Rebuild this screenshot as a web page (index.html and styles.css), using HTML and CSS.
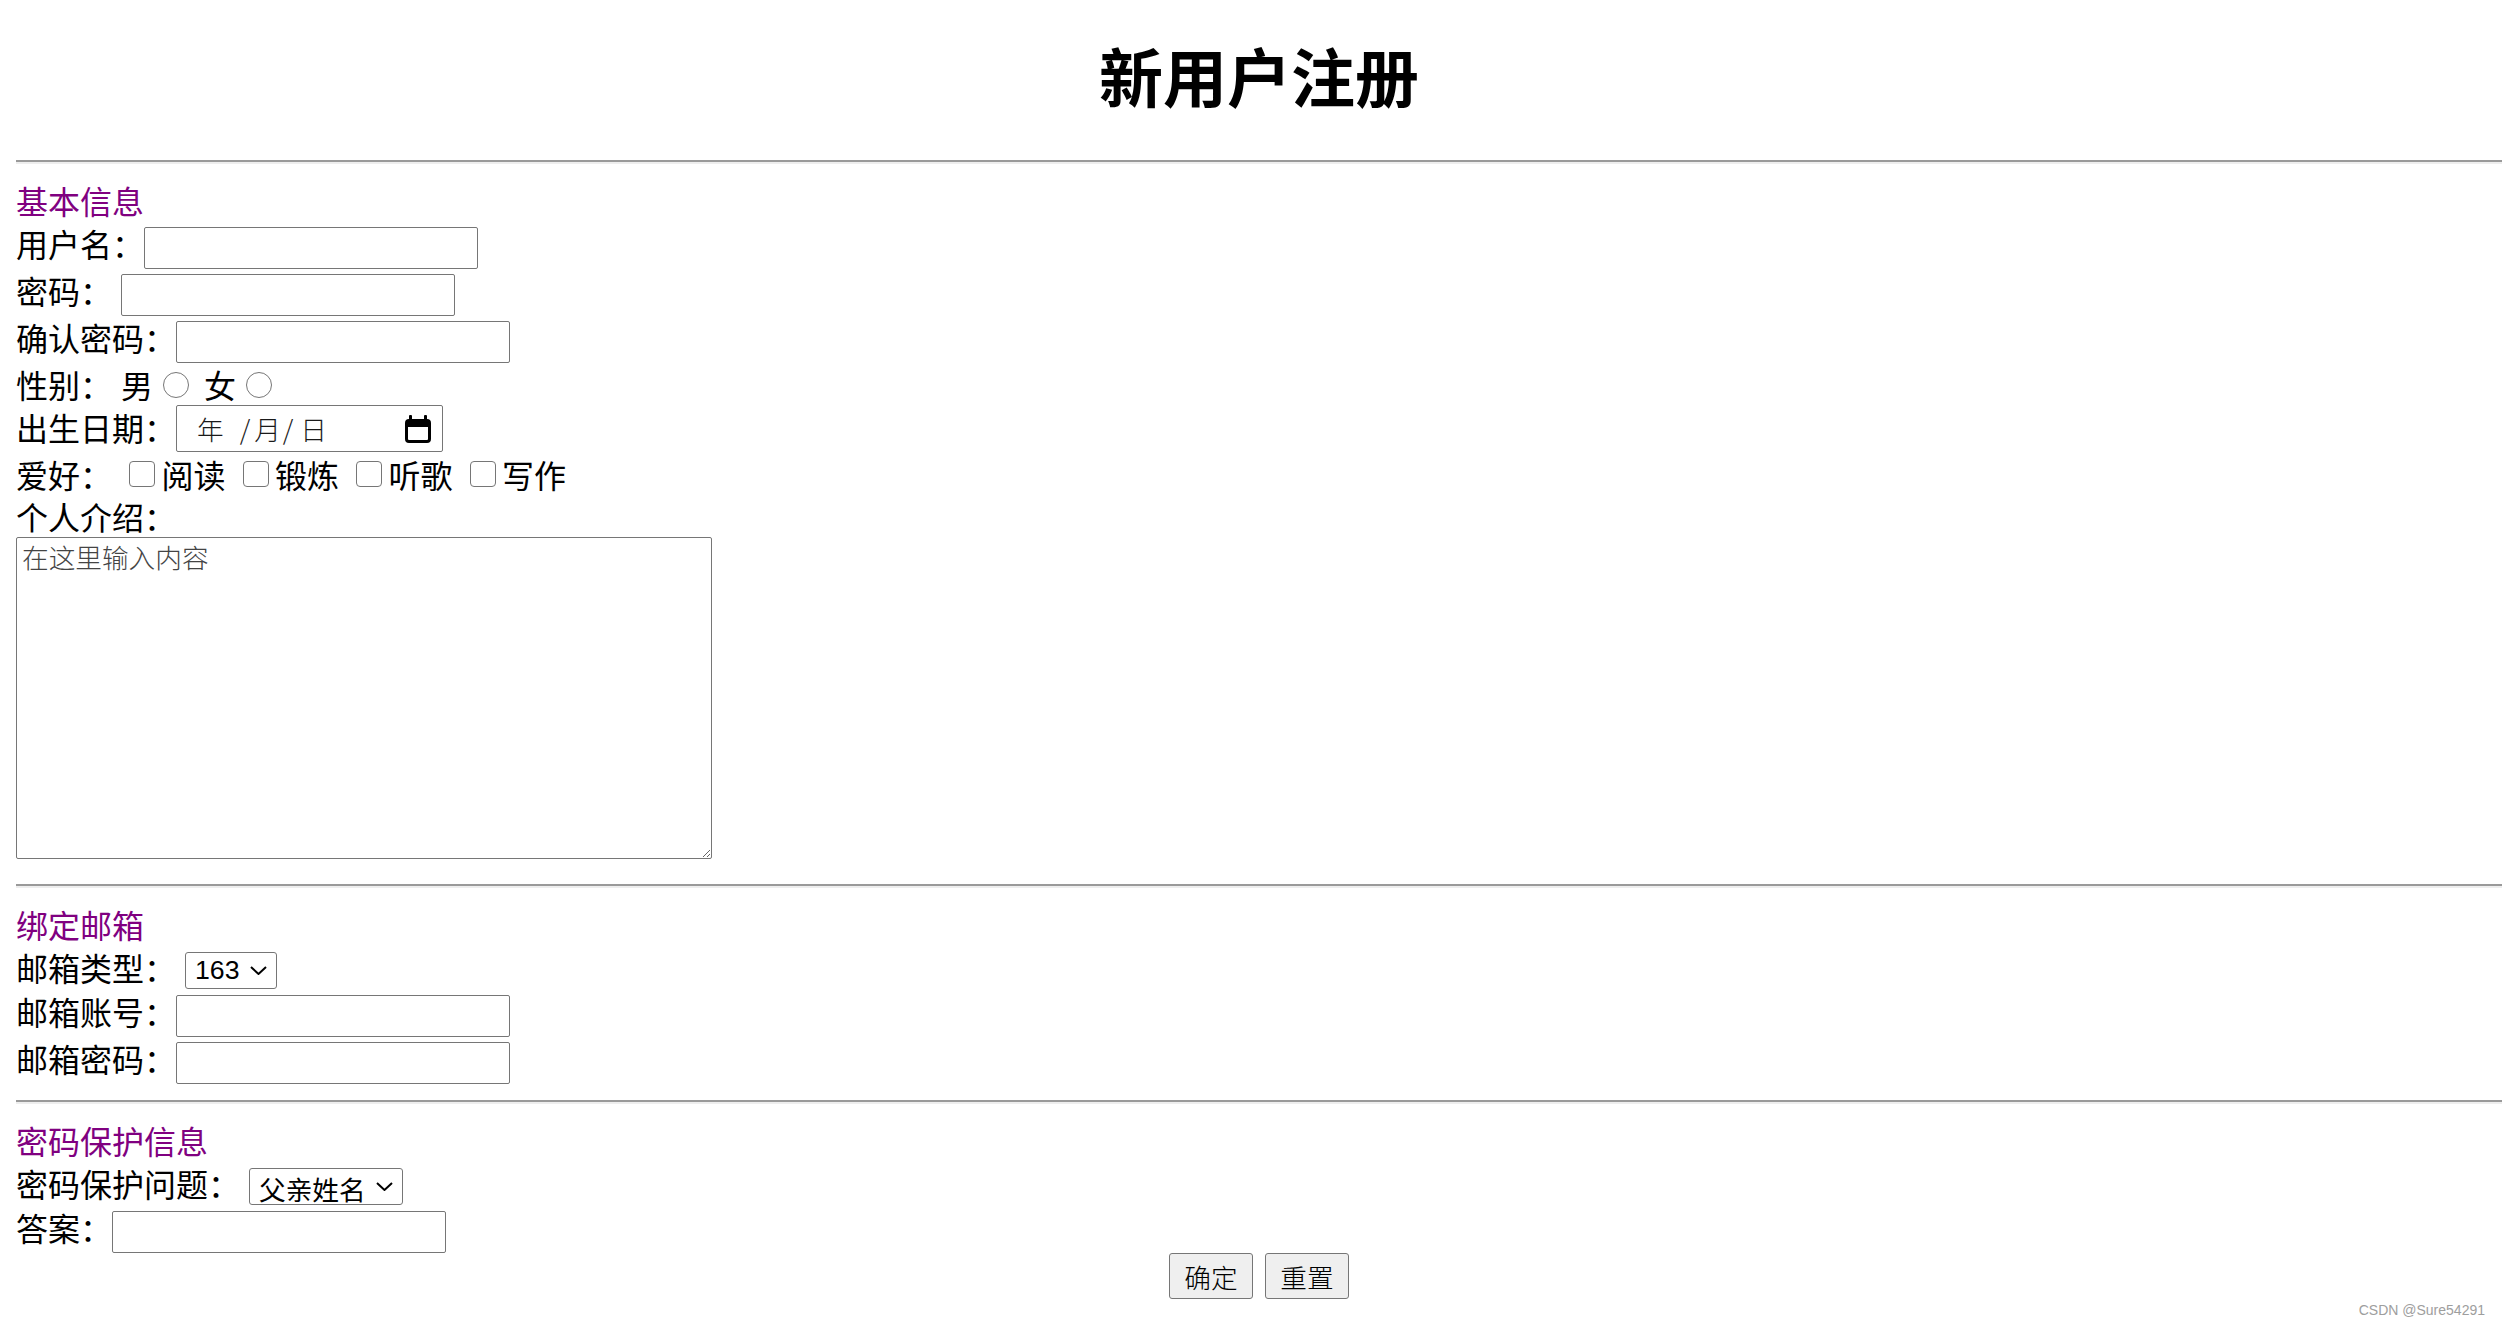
FILE: index.html
```html
<!DOCTYPE html>
<html lang="zh-CN">
<head>
<meta charset="utf-8">
<title>新用户注册</title>
<link rel="stylesheet" href="styles.css">
</head>
<body>
<h1 class="title">新用户注册</h1>
<hr class="rule">
<form class="form">
  <section class="group group-basic">
    <div class="section-title">基本信息</div>
    <div class="row row-field">
      <label class="label">用户名：</label>
      <input class="text-input" type="text">
    </div>
    <div class="row row-field">
      <label class="label">密码：</label>
      <input class="text-input spaced" type="password">
    </div>
    <div class="row row-field">
      <label class="label">确认密码：</label>
      <input class="text-input" type="password">
    </div>
    <div class="row row-choice">
      <span class="label">性别：</span>
      <span class="choice-text spaced">男</span><input class="radio" type="radio" name="sex">
      <span class="choice-text">女</span><input class="radio" type="radio" name="sex">
    </div>
    <div class="row row-date">
      <span class="label">出生日期：</span>
      <div class="date-field">
        <span class="date-text"><span>年</span><span class="date-sep date-sep-first">/</span><span>月</span><span class="date-sep">/</span><span>日</span></span>
        <svg class="cal-icon" viewBox="0 0 26 28" width="26" height="28" aria-hidden="true">
          <rect x="4" y="0" width="3" height="7" rx="1" fill="#000"/>
          <rect x="19" y="0" width="3" height="7" rx="1" fill="#000"/>
          <rect x="1.5" y="5.5" width="23" height="21" rx="2.5" fill="none" stroke="#000" stroke-width="3"/>
          <rect x="1" y="5" width="24" height="7" rx="2" fill="#000"/>
        </svg>
      </div>
    </div>
    <div class="row row-check">
      <span class="label">爱好：</span>
      <input class="check" type="checkbox"><span class="choice-text">阅读</span>
      <input class="check" type="checkbox"><span class="choice-text">锻炼</span>
      <input class="check" type="checkbox"><span class="choice-text">听歌</span>
      <input class="check" type="checkbox"><span class="choice-text">写作</span>
    </div>
    <div class="text-row">个人介绍：</div>
    <textarea class="intro" placeholder="在这里输入内容"></textarea>
  </section>
  <hr class="rule">
  <section class="group group-mail">
    <div class="section-title">绑定邮箱</div>
    <div class="row row-select">
      <span class="label">邮箱类型：</span>
      <span class="select-wrap select-mail">
        <select class="select select-digits">
          <option>163</option>
          <option>126</option>
          <option>qq</option>
        </select>
        <svg class="chevron" viewBox="0 0 17 9" width="17" height="9" aria-hidden="true"><path d="M1 1 L8.5 8 L16 1" fill="none" stroke="#000" stroke-width="2"/></svg>
      </span>
    </div>
    <div class="row row-field">
      <label class="label">邮箱账号：</label>
      <input class="text-input" type="text">
    </div>
    <div class="row row-field">
      <label class="label">邮箱密码：</label>
      <input class="text-input" type="password">
    </div>
  </section>
  <hr class="rule">
  <section class="group group-safe">
    <div class="section-title">密码保护信息</div>
    <div class="row row-select">
      <span class="label">密码保护问题：</span>
      <span class="select-wrap select-question">
        <select class="select">
          <option>父亲姓名</option>
          <option>母亲姓名</option>
          <option>出生地</option>
        </select>
        <svg class="chevron" viewBox="0 0 17 9" width="17" height="9" aria-hidden="true"><path d="M1 1 L8.5 8 L16 1" fill="none" stroke="#000" stroke-width="2"/></svg>
      </span>
    </div>
    <div class="row row-field">
      <label class="label">答案：</label>
      <input class="text-input" type="text">
    </div>
  </section>
  <div class="actions">
    <button class="btn" type="submit">确定</button>
    <button class="btn" type="reset">重置</button>
  </div>
</form>
<div class="watermark">CSDN @Sure54291</div>
</body>
</html>
```
FILE: styles.css
```css
html {
  background: #fff;
}

body {
  margin: 0 0 0 16px;
  font-family: "Noto Sans CJK SC", "Liberation Sans", sans-serif;
  font-size: 32px;
  color: #000;
}

.title {
  margin: 42px 0 54px;
  font-size: 64px;
  line-height: 64px;
  font-weight: 700;
  text-align: center;
}

.rule {
  margin: 0;
  height: 0;
  border: 0;
  border-top: 2px solid #9a9a9a;
  border-bottom: 2px solid #eeeeee;
}

.form {
  margin: 0;
}

.group {
  padding-top: 17px;
}

.group-basic {
  padding-bottom: 25px;
}

.group-mail {
  padding-bottom: 14px;
}

.section-title {
  height: 43px;
  line-height: 39px;
  color: #800080;
}

.row {
  display: flex;
  align-items: center;
}

.row-field {
  height: 47px;
}

.row-select {
  height: 44px;
}

.row-choice {
  height: 40px;
}

.row-date {
  height: 47px;
}

.row-check {
  height: 46px;
}

.label,
.choice-text {
  line-height: 32px;
  white-space: nowrap;
}

.row-field .label {
  margin-bottom: 9px;
}

.row-select .label {
  margin-bottom: 6px;
}

.row-choice .label,
.row-choice .choice-text,
.row-check .label,
.row-check .choice-text {
  margin-bottom: 2px;
}

.row-date .label {
  margin-bottom: 4px;
}

.text-input {
  box-sizing: border-box;
  width: 334px;
  height: 42px;
  margin: 0;
  padding: 0 4px;
  border: 1px solid #767676;
  border-radius: 2px;
  background: #fff;
  font-family: "Noto Sans CJK SC", sans-serif;
  font-size: 26.67px;
}

.row .spaced {
  margin-left: 9px;
}

.radio {
  appearance: none;
  -webkit-appearance: none;
  box-sizing: border-box;
  width: 26px;
  height: 26px;
  margin: 0 15px 1px 10px;
  border: 1px solid #767676;
  border-radius: 50%;
  background: #fff;
}

.check {
  appearance: none;
  -webkit-appearance: none;
  box-sizing: border-box;
  width: 26px;
  height: 26px;
  margin: 0 6.5px 2px 17px;
  border: 1px solid #767676;
  border-radius: 4px;
  background: #fff;
}

.date-field {
  box-sizing: border-box;
  width: 267px;
  height: 47px;
  display: flex;
  align-items: center;
  justify-content: space-between;
  padding: 0 11px 0 20px;
  border: 1px solid #767676;
  border-radius: 2px;
  background: #fff;
}

.date-text {
  display: flex;
  font-size: 26.67px;
  line-height: 30px;
  font-weight: 300;
  color: #1a1a1a;
}

.date-sep {
  margin: 0 7px 0 2px;
}

.date-sep-first {
  margin: 0 4px 0 16px;
}

.cal-icon {
  display: block;
  width: 26px;
  height: 28px;
}

.text-row {
  height: 39px;
  line-height: 36px;
}

.intro {
  display: block;
  box-sizing: border-box;
  width: 696px;
  height: 322px;
  margin: 0;
  padding: 2px 5px;
  border: 1px solid #767676;
  border-radius: 2px;
  font-family: "Noto Sans CJK SC", sans-serif;
  font-size: 26.67px;
  line-height: 1.3;
  font-weight: 300;
  color: #000;
  background: #fff;
}

.intro::placeholder {
  color: #444444;
}

.select-wrap {
  position: relative;
  display: inline-flex;
  margin-left: 9px;
}

.select-mail {
  width: 92px;
}

.select-question {
  width: 154px;
}

.select {
  appearance: none;
  -webkit-appearance: none;
  box-sizing: border-box;
  width: 100%;
  height: 37px;
  margin: 0;
  padding: 0 0 0 9px;
  border: 1px solid #767676;
  border-radius: 3px;
  background: #fff;
  color: #000;
  font-family: "Noto Sans CJK SC", sans-serif;
  font-size: 26.67px;
}

.select-digits {
  font-family: "Liberation Sans", "Noto Sans CJK SC", sans-serif;
}

.chevron {
  position: absolute;
  right: 10px;
  top: 50%;
  margin-top: -4.5px;
  width: 17px;
  height: 9px;
  pointer-events: none;
}

.actions {
  display: flex;
  justify-content: center;
  gap: 12px;
  margin-top: -2px;
}

.btn {
  box-sizing: border-box;
  width: 84px;
  height: 46px;
  margin: 0;
  padding: 0;
  border: 1px solid #767676;
  border-radius: 3px;
  background: #efefef;
  color: #000;
  font-family: "Noto Sans CJK SC", sans-serif;
  font-size: 26.67px;
  font-weight: 300;
}

.watermark {
  position: absolute;
  right: 17px;
  bottom: 8px;
  font-family: "Liberation Sans", sans-serif;
  font-size: 14px;
  line-height: 16px;
  color: #9e9e9e;
}
```
